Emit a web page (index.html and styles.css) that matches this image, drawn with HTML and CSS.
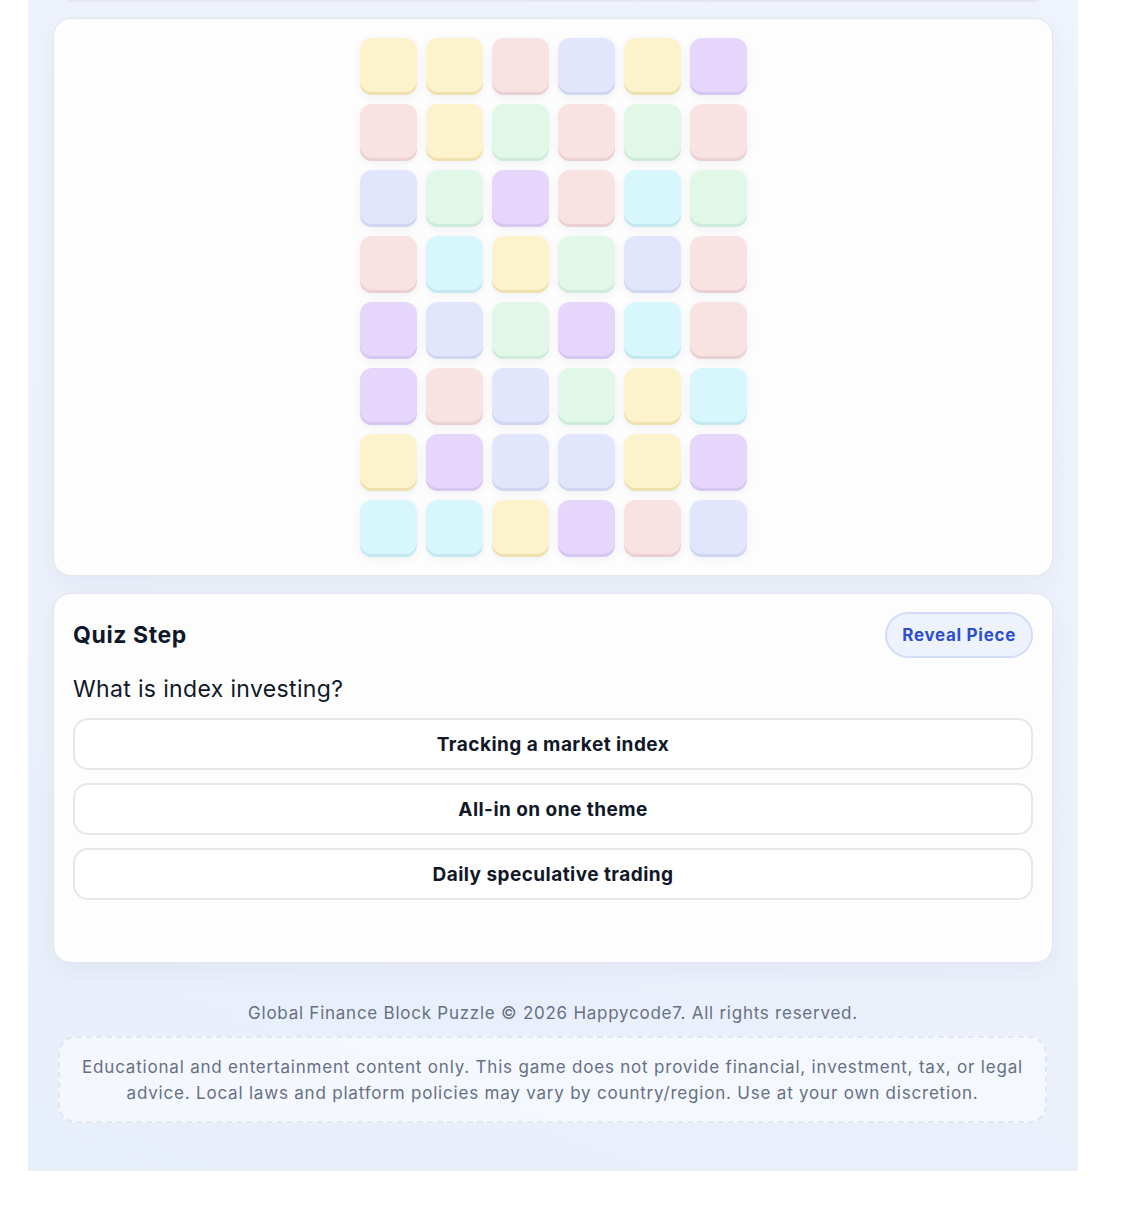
FILE: index.html
```html
<!DOCTYPE html>
<html lang="en">
<head>
<meta charset="utf-8">
<title>Global Finance Block Puzzle</title>
<link rel="stylesheet" href="styles.css">
</head>
<body>
<div class="app">
  <div class="prev-card"></div>
  <section class="card board-card">
    <div class="grid">
      <div class="tile y"></div><div class="tile y"></div><div class="tile p"></div><div class="tile b"></div><div class="tile y"></div><div class="tile v"></div>
      <div class="tile p"></div><div class="tile y"></div><div class="tile g"></div><div class="tile p"></div><div class="tile g"></div><div class="tile p"></div>
      <div class="tile b"></div><div class="tile g"></div><div class="tile v"></div><div class="tile p"></div><div class="tile c"></div><div class="tile g"></div>
      <div class="tile p"></div><div class="tile c"></div><div class="tile y"></div><div class="tile g"></div><div class="tile b"></div><div class="tile p"></div>
      <div class="tile v"></div><div class="tile b"></div><div class="tile g"></div><div class="tile v"></div><div class="tile c"></div><div class="tile p"></div>
      <div class="tile v"></div><div class="tile p"></div><div class="tile b"></div><div class="tile g"></div><div class="tile y"></div><div class="tile c"></div>
      <div class="tile y"></div><div class="tile v"></div><div class="tile b"></div><div class="tile b"></div><div class="tile y"></div><div class="tile v"></div>
      <div class="tile c"></div><div class="tile c"></div><div class="tile y"></div><div class="tile v"></div><div class="tile p"></div><div class="tile b"></div>
    </div>
  </section>
  <section class="card quiz-card">
    <div class="quiz-head">
      <h2 class="quiz-title">Quiz Step</h2>
      <button class="reveal">Reveal Piece</button>
    </div>
    <p class="question">What is index investing?</p>
    <div class="options">
      <button class="option">Tracking a market index</button>
      <button class="option">All-in on one theme</button>
      <button class="option">Daily speculative trading</button>
    </div>
    <div class="feedback"></div>
  </section>
  <footer class="footer">
    <p class="copy">Global Finance Block Puzzle © 2026 Happycode7. All rights reserved.</p>
    <p class="disclaimer">Educational and entertainment content only. This game does not provide financial, investment, tax, or legal advice. Local laws and platform policies may vary by country/region. Use at your own discretion.</p>
  </footer>
</div>
</body>
</html>
```
FILE: styles.css
```css
* { box-sizing: border-box; }
html, body { margin: 0; padding: 0; background: #ffffff; }
body {
  font-family: Inter, "Noto Sans", "DejaVu Sans", sans-serif;
  color: #111827;
}
.app {
  width: 1050px;
  margin-left: 28px;
  padding: 0 25px 48px;
  background: linear-gradient(20deg, #e7effb 0%, #edf1fb 45%, #eff3fe 100%);
  display: flex;
  flex-direction: column;
}
.prev-card {
  height: 2px;
  margin: 0 14px 16px;
  background: #e6e8ee;
  border-radius: 0 0 16px 16px;
}
.card {
  background: #fdfdfe;
  border: 1px solid #e3e6ec;
  border-radius: 18px;
  box-shadow: 0 8px 24px rgba(30, 50, 100, 0.05);
}
.board-card {
  padding: 19px 0 18px;
  display: flex;
  justify-content: center;
}
.grid {
  display: grid;
  grid-template-columns: repeat(6, 57px);
  grid-auto-rows: 57px;
  gap: 9px;
  margin-left: 1px;
}
.tile {
  border-radius: 12px;
  box-shadow: inset 0 -3px 0 var(--edge), 0 2px 8px rgba(20, 30, 60, 0.06);
}
.y { background: #fcf3cd; --edge: #efe0b0; }
.p { background: #f8e2e2; --edge: #ead0d3; }
.b { background: #e1e6fc; --edge: #d0d6ef; }
.v { background: #e7d6fb; --edge: #d7c6ef; }
.g { background: #e1f8e9; --edge: #cdebd8; }
.c { background: #d7f7fc; --edge: #c3e8ef; }

.quiz-card {
  margin-top: 17px;
  padding: 18px 19px 0;
  height: 370px;
}
.quiz-head {
  display: flex;
  justify-content: space-between;
  align-items: center;
}
.quiz-title {
  margin: 0;
  font-size: 23px;
  font-weight: 700;
  letter-spacing: 0.6px;
  color: #0f172a;
}
.reveal {
  font-family: inherit;
  height: 46px;
  padding: 0 15px;
  border-radius: 23px;
  border: 2px solid #d4ddf6;
  background: #eef2fd;
  color: #2d4fcf;
  font-size: 17px;
  font-weight: 700;
  letter-spacing: 0.7px;
}
.question {
  margin: 16px 0 0;
  font-size: 23px;
  line-height: 30px;
  letter-spacing: 0.35px;
  color: #111827;
}
.options {
  margin-top: 14px;
  display: flex;
  flex-direction: column;
  gap: 13px;
}
.option {
  font-family: inherit;
  height: 52px;
  border-radius: 15px;
  border: 2px solid #e5e7ec;
  background: #ffffff;
  color: #111827;
  font-size: 19px;
  font-weight: 700;
  letter-spacing: 0.45px;
}
.footer {
  padding-top: 38px;
  display: flex;
  flex-direction: column;
  align-items: center;
}
.copy {
  margin: 0;
  font-size: 17px;
  line-height: 24px;
  color: #667085;
  letter-spacing: 0.75px;
}
.disclaimer {
  margin: 11px 6px 0 5px;
  align-self: stretch;
  padding: 16px 20px 15px;
  border: 2px dashed #e3e7ef;
  border-radius: 18px;
  background: rgba(250, 251, 255, 0.7);
  font-size: 17px;
  line-height: 26px;
  text-align: center;
  color: #667085;
  letter-spacing: 0.8px;
}
```
